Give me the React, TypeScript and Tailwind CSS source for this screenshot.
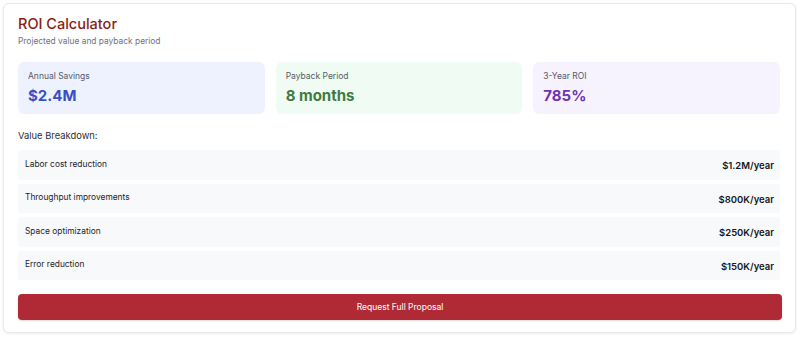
export default function App() {
  const stats = [
    { label: "Annual Savings", value: "$2.4M", bg: "bg-[#eef2fe]", color: "text-[#3b4fc4]" },
    { label: "Payback Period", value: "8 months", bg: "bg-[#f0fcf3]", color: "text-[#3f7a3f]" },
    { label: "3-Year ROI", value: "785%", bg: "bg-[#f6f2fe]", color: "text-[#6d35b3]" },
  ];
  const rows = [
    { label: "Labor cost reduction", value: "$1.2M/year" },
    { label: "Throughput improvements", value: "$800K/year" },
    { label: "Space optimization", value: "$250K/year" },
    { label: "Error reduction", value: "$150K/year" },
  ];
  return (
    <div className="w-[800px] h-[338px] bg-white p-[3px] font-['Inter','Liberation_Sans',sans-serif]">
      <div className="w-[793px] h-[330px] rounded-md border border-[#e7e9ed] shadow-[0_1px_3px_rgba(0,0,0,0.08)] bg-white px-[14px] pt-[11px]">
        <h1 className="text-[14.5px] leading-[18px] font-medium text-[#8a1d14]">ROI Calculator</h1>
        <p className="text-[8.4px] leading-[11px] mt-[2.5px] text-[#6b7280]">Projected value and payback period</p>

        <div className="grid grid-cols-3 gap-[11px] mt-[15.5px] pr-[1px]">
          {stats.map((s) => (
            <div key={s.label} className={`${s.bg} rounded-md h-[52px] pl-[10px] pt-[8.5px]`}>
              <div className="text-[8.5px] leading-[11px] text-[#555b66]">{s.label}</div>
              <div className={`text-[15px] leading-[20px] font-bold mt-[4.5px] ${s.color}`}>{s.value}</div>
            </div>
          ))}
        </div>

        <div className="text-[9.4px] leading-[13px] text-[#2b2f36] mt-[14.5px]">Value Breakdown:</div>

        <div className="flex flex-col gap-[4px] mt-[8.5px] pr-[1px]">
          {rows.map((r) => (
            <div key={r.label} className="h-[29.5px] bg-[#f8f9fb] rounded-[3px] flex items-center justify-between pl-[7px] pr-[6px]">
              <span className="text-[8.4px] text-[#1f2328] -mt-[1px]">{r.label}</span>
              <span className="text-[9.5px] font-semibold text-[#15181c] mt-[3px]">{r.value}</span>
            </div>
          ))}
        </div>

        <button className="mt-[14px] w-[764px] h-[26px] rounded-[4px] bg-[#b02a35] text-white text-[8.5px] flex items-center justify-center shadow-[0_1px_2px_rgba(0,0,0,0.15)]">
          Request Full Proposal
        </button>
      </div>
    </div>
  );
}
